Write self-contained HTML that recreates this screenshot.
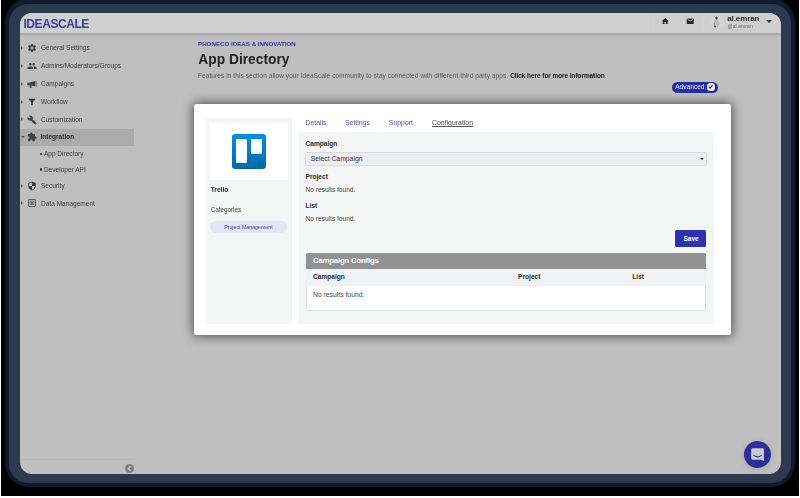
<!DOCTYPE html>
<html><head><meta charset="utf-8">
<style>
*{box-sizing:border-box;margin:0;padding:0}
html,body{width:800px;height:498px;overflow:hidden;background:#fff;font-family:"Liberation Sans",sans-serif;}
#blk{position:absolute;left:1px;top:0;width:798px;height:496px;background:#000;overflow:hidden}
#navy{position:absolute;left:3.5px;top:-2px;width:790.5px;height:489px;background:#0f1a2e;border-radius:24px}
#slate{position:absolute;left:8px;top:4px;width:781.6px;height:479px;background:#2c3a4e;border-radius:19px}
#scr{position:absolute;left:19px;top:13px;width:761px;height:461px;background:#bfbfbf;border-radius:12px;overflow:hidden}
#pg{position:absolute;left:-20px;top:-13px;width:800px;height:498px;filter:blur(.4px)}
.a{position:absolute;white-space:nowrap;line-height:1}
.a svg{display:block}
#hdr{position:absolute;left:20px;top:13px;width:761px;height:20.7px;background:#cfcfcf;border-bottom:1px solid #adadad;box-shadow:0 1px 1.5px rgba(0,0,0,.14)}
.sep{position:absolute;top:13px;width:1px;height:19px;background:#d2d2d2}
.mt{font-size:6.55px;color:#3c3c3c}
.ar{position:absolute;left:21.3px;width:0;height:0;border-left:2.6px solid #5a5a5a;border-top:2px solid transparent;border-bottom:2px solid transparent}
.ic{position:absolute;left:27px;width:10px;height:10px;margin-top:-.5px}
.ic svg{width:10px;height:10px;display:block;fill:#3f3f3f}
.lb{font-size:6.6px;font-weight:bold;color:#2b2b2b}
.tx{font-size:6.6px;color:#444}
.tab{font-size:6.9px;color:#4a50c4}
</style></head><body>
<div id="blk">
<div id="navy"></div>
<div id="slate"></div>
<div id="scr"><div id="pg">
 <div id="hdr"></div>
 <div class="sep" style="left:653px"></div><div class="sep" style="left:678px"></div><div class="sep" style="left:703px"></div>
 <div class="a" id="logo" style="left:23.4px;top:18.3px;font-size:12px;font-weight:bold;color:#3340a8;letter-spacing:-.42px">IDEASCALE</div>

 <!-- SIDEBAR -->
 <div class="a" style="left:20px;top:128.7px;width:114px;height:17.3px;background:#ababab"></div>
 <div class="ar" style="top:46.0px"></div>
 <div class="ic" style="top:43.7px"><svg viewBox="0 0 24 24"><path d="M19.14,12.94c0.04-0.3,0.06-0.61,0.06-0.94c0-0.32-0.02-0.64-0.07-0.94l2.03-1.58c0.18-0.14,0.23-0.41,0.12-0.61 l-1.92-3.32c-0.12-0.22-0.37-0.29-0.59-0.22l-2.39,0.96c-0.5-0.38-1.03-0.7-1.62-0.94L14.4,2.81c-0.04-0.24-0.24-0.41-0.48-0.41 h-3.84c-0.24,0-0.43,0.17-0.47,0.41L9.25,5.35C8.66,5.59,8.12,5.92,7.63,6.29L5.24,5.33c-0.22-0.08-0.47,0-0.59,0.22L2.74,8.87 C2.62,9.08,2.66,9.34,2.86,9.48l2.03,1.58C4.84,11.36,4.8,11.69,4.8,12s0.02,0.64,0.07,0.94l-2.03,1.58 c-0.18,0.14-0.23,0.41-0.12,0.61l1.92,3.32c0.12,0.22,0.37,0.29,0.59,0.22l2.39-0.96c0.5,0.38,1.03,0.7,1.62,0.94l0.36,2.54 c0.05,0.24,0.24,0.41,0.48,0.41h3.84c0.24,0,0.44-0.17,0.47-0.41l0.36-2.54c0.59-0.24,1.13-0.56,1.62-0.94l2.39,0.96 c0.22,0.08,0.47,0,0.59-0.22l1.92-3.32c0.12-0.22,0.07-0.47-0.12-0.61L19.14,12.94z M12,15.6c-1.98,0-3.6-1.62-3.6-3.6 s1.62-3.6,3.6-3.6s3.6,1.62,3.6,3.6S13.98,15.6,12,15.6z"/></svg></div>
 <div class="a mt" id="m_gear" style="left:41px;top:45.4px;">General Settings</div>
 <div class="ar" style="top:63.8px"></div>
 <div class="ic" style="top:61.5px"><svg viewBox="0 0 24 24"><path d="M16 11c1.66 0 2.99-1.34 2.99-3S17.66 5 16 5c-1.66 0-3 1.34-3 3s1.34 3 3 3zm-8 0c1.66 0 2.99-1.34 2.99-3S9.66 5 8 5C6.34 5 5 6.34 5 8s1.34 3 3 3zm0 2c-2.33 0-7 1.17-7 3.5V19h14v-2.5c0-2.33-4.67-3.5-7-3.5zm8 0c-.29 0-.62.02-.97.05 1.16.84 1.97 1.97 1.97 3.45V19h6v-2.5c0-2.33-4.67-3.5-7-3.5z"/></svg></div>
 <div class="a mt" id="m_group" style="left:41px;top:63.2px;">Admins/Moderators/Groups</div>
 <div class="ar" style="top:81.7px"></div>
 <div class="ic" style="top:79.4px"><svg viewBox="0 0 24 24"><path d="M0.4 9 H5 V15 H0.4Z M5.5 8.6 L19.4 5 V17.6 L5.5 15.3Z M6 15.6 L10.6 16.5 L10.9 21.6 H6.9Z"/><path d="M20.4 4.6 H23.6 V18.8 H20.4Z" fill="#707070"/></svg></div>
 <div class="a mt" id="m_horn" style="left:41px;top:81.1px;">Campaigns</div>
 <div class="ar" style="top:99.7px"></div>
 <div class="ic" style="top:97.4px"><svg viewBox="0 0 24 24"><path d="M4.25 5.61C6.27 8.2 10 13 10 13v6c0 .55.45 1 1 1h2c.55 0 1-.45 1-1v-6s3.72-4.8 5.74-7.39A.998.998 0 0 0 18.95 4H5.04c-.83 0-1.3.95-.79 1.61z"/></svg></div>
 <div class="a mt" id="m_filter" style="left:41px;top:99.1px;">Workflow</div>
 <div class="ar" style="top:117.4px"></div>
 <div class="ic" style="top:115.1px"><svg viewBox="0 0 24 24"><path d="M22.7 19l-9.1-9.1c.9-2.3.4-5-1.5-6.9-2-2-5-2.4-7.4-1.3L9 6 6 9 1.6 4.7C.4 7.1.9 10.1 2.9 12.1c1.9 1.9 4.6 2.4 6.9 1.5l9.1 9.1c.4.4 1 .4 1.4 0l2.3-2.3c.5-.4.5-1.1.1-1.4z"/></svg></div>
 <div class="a mt" id="m_wrench" style="left:41px;top:116.8px;">Customization</div>
 <div class="a" style="left:21px;top:135.6px;width:0;height:0;border-top:2.4px solid #555;border-left:2px solid transparent;border-right:2px solid transparent"></div>
 <div class="ic" style="top:132.7px"><svg viewBox="0 0 24 24"><path d="M20.5 11H19V7c0-1.1-.9-2-2-2h-4V3.500C13 2.120 11.880 1 10.500 1S8 2.120 8 3.500V5H4c-1.100 0-1.990.9-1.990 2v3.800H3.500c1.490 0 2.700 1.210 2.700 2.700s-1.210 2.700-2.700 2.700H2V20c0 1.100.9 2 2 2h3.800v-1.500c0-1.490 1.210-2.700 2.700-2.700 1.490 0 2.700 1.210 2.700 2.700V22H17c1.100 0 2-.9 2-2v-4h1.500c1.380 0 2.500-1.120 2.500-2.500S21.880 11 20.500 11z"/></svg></div>
 <div class="a mt" id="m_puzzle" style="left:40.4px;top:134.4px;font-weight:bold;color:#2a2a2a;">Integration</div>
 <div class="ar" style="top:183.5px"></div>
 <div class="ic" style="top:181.2px"><svg viewBox="0 0 24 24"><path d="M12 1L3 5v6c0 5.550 3.840 10.740 9 12 5.160-1.260 9-6.450 9-12V5l-9-4zm0 10.990h7c-.53 4.120-3.280 7.790-7 8.940V12H5V6.300l7-3.110v8.800z"/></svg></div>
 <div class="a mt" id="m_shield" style="left:41px;top:182.9px;">Security</div>
 <div class="ar" style="top:201.2px"></div>
 <div class="ic" style="top:198.9px"><svg viewBox="0 0 24 24"><path d="M3 3v18h18V3H3zm16 16H5V5h14v14z M11 6.500h1.800v11H11z M6.500 11.100h11v1.800h-11z M14 8h3v1.600h-3z M14 14.800h3v1.600h-3z M7 8h3v1.600H7z M7 14.800h3v1.600H7z"/></svg></div>
 <div class="a mt" id="m_table" style="left:41px;top:200.6px;">Data Management</div>
 <div class="a" style="left:39.6px;top:152.7px;width:2.5px;height:2.5px;border-radius:50%;background:#2c2c2c"></div>
 <div class="a mt" id="s1" style="left:43.9px;top:151.4px">App Directory</div>
 <div class="a" style="left:39.6px;top:168.0px;width:2.5px;height:2.5px;border-radius:50%;background:#2c2c2c"></div>
 <div class="a mt" id="s2" style="left:43.9px;top:166.7px">Developer API</div>
 <div class="a" style="left:661px;top:16.8px"><svg width="8.5" height="8.5" viewBox="0 0 24 24" fill="#262626"><path d="M10 20v-6h4v6h5v-8h3L12 3 2 12h3v8z"/></svg></div>
 <div class="a" style="left:686.2px;top:17.3px"><svg width="8.4" height="8.4" viewBox="0 0 24 24" fill="#262626"><path d="M20 4H4c-1.100 0-1.990.9-1.990 2L2 18c0 1.100.9 2 2 2h16c1.100 0 2-.9 2-2V6c0-1.100-.9-2-2-2zm0 4l-8 5-8-5V6l8 5 8-5v2z"/></svg></div>
 <div class="a" style="left:711.2px;top:16.4px;width:11.5px;height:11.5px;border-radius:50%;background:#d4d4d4"></div>
 <div class="a" style="left:711.2px;top:16.4px"><svg width="11.5" height="12" viewBox="0 0 23 24"><ellipse cx="10.9" cy="4.2" rx="2.4" ry="3.4" fill="#3a3a3a"/><path d="M8 8.5 Q4 14 6.5 20.5 L9.5 22.5 Q7.5 15 9.8 9.5Z" fill="#9a9a9a"/><path d="M13.2 9 Q17.5 13.5 14.2 21.5 L11.8 21 Q13.8 15 12.2 10Z" fill="#a8a8a8"/><path d="M9.5 10 L12.5 10 L12.5 20 L9.8 20Z" fill="#c2c2c2"/><ellipse cx="8" cy="21" rx="2.1" ry="1.9" fill="#4a4a4a"/></svg></div>
 <div class="a" id="uname" style="left:727.2px;top:14.6px;font-size:8px;font-weight:bold;color:#2b2b2b;letter-spacing:-.1px">al.emran</div>
 <div class="a" id="uhand" style="left:727.4px;top:24px;font-size:5.2px;color:#6a6a6a">@al.emran</div>
 <div class="a" style="left:766px;top:19.8px;width:0;height:0;border-top:3.1px solid #333;border-left:3.1px solid transparent;border-right:3.1px solid transparent"></div>

 <!-- MAIN -->
 <div class="a" style="left:198px;top:40.6px;font-size:6.2px;font-weight:bold;color:#323ca8;letter-spacing:0">PHONECO IDEAS &amp; INNOVATION</div>
 <div class="a" style="left:198.3px;top:52.5px;font-size:13.8px;font-weight:bold;color:#232323">App Directory</div>
 <div class="a" id="desc" style="left:198px;top:73.4px;font-size:6.4px;letter-spacing:.13px;color:#555">Features in this section allow your IdeaScale community to stay connected with different third party apps. <b style="color:#161616;letter-spacing:-.02px">Click here for more information</b>.</div>

 <!-- Advanced pill -->
 <div class="a" style="left:671.6px;top:81.7px;width:46.5px;height:11px;border-radius:6px;background:#2730a0"></div>
 <div class="a" style="left:675.2px;top:83.9px;font-size:6.6px;color:rgba(255,255,255,.88)">Advanced</div>
 <div class="a" style="left:707.4px;top:83.4px;width:7.2px;height:7.2px;border-radius:50%;background:#f4f4f8"></div>
 <div class="a" style="left:707.4px;top:83.4px"><svg width="7.2" height="7.2" viewBox="0 0 10 10"><path d="M2.5 5.2 L4.3 7 L7.7 3.2" fill="none" stroke="#1f2895" stroke-width="1.7"/></svg></div>

 <!-- CARD -->
 <div class="a" style="left:194.1px;top:104px;width:537px;height:230.6px;background:#fff;border-radius:2.5px;box-shadow:0 0 11px 1px rgba(0,0,0,.62)"></div>
 <!-- left panel -->
 <div class="a" style="left:206px;top:118px;width:86px;height:205.5px;background:#f4f6f6"></div>
 <div class="a" style="left:210.4px;top:122.5px;width:77.3px;height:57.9px;background:#fff"></div>
 <div class="a" style="left:231.8px;top:134.3px;width:34.3px;height:34.3px;border-radius:3.2px;background:linear-gradient(#0091e6,#0069a8)"></div>
 <div class="a" style="left:236.2px;top:139.2px;width:10.7px;height:23.9px;border-radius:1.3px;background:#fff"></div>
 <div class="a" style="left:251.2px;top:139.2px;width:10.6px;height:15px;border-radius:1.3px;background:#fff"></div>
 <div class="a lb" style="left:210.7px;top:187.2px;font-size:6.6px">Trello</div>
 <div class="a tx" style="left:210.7px;top:207.3px;font-size:6.3px">Categories</div>
 <div class="a" style="left:210.2px;top:221.2px;width:77.2px;height:12px;border-radius:6px;background:#e1e5f5"></div>
 <div class="a" style="left:224.2px;top:224.6px;font-size:5.25px;color:#3b46b0">Project Management</div>

 <!-- tabs -->
 <div class="a tab" style="left:305.5px;top:120.2px">Details</div>
 <div class="a tab" style="left:345px;top:120.2px">Settings</div>
 <div class="a tab" style="left:388.8px;top:120.2px">Support</div>
 <div class="a tab" style="left:432px;top:120.2px;color:#454545">Configuration</div>
 <div class="a" style="left:432px;top:126px;width:41px;height:.7px;background:#5a5a5a"></div>

 <!-- right panel -->
 <div class="a" style="left:298.8px;top:132px;width:415.2px;height:191.5px;background:#f4f6f6"></div>
 <div class="a lb" style="left:305.5px;top:141.1px">Campaign</div>
 <div class="a" style="left:305.2px;top:152px;width:401.4px;height:13.7px;border-radius:1.8px;background:#edeef3;border:.8px solid #d9dbe0"></div>
 <div class="a" style="left:310.7px;top:156.2px;font-size:6.8px;color:#333">Select Campaign</div>
 <div class="a" style="left:699.7px;top:157.6px;width:0;height:0;border-top:2.8px solid #3a3a3a;border-left:2.1px solid transparent;border-right:2.1px solid transparent"></div>
 <div class="a lb" style="left:305.5px;top:174.4px">Project</div>
 <div class="a tx" style="left:305.5px;top:187px">No results found.</div>
 <div class="a lb" style="left:305.5px;top:203.2px">List</div>
 <div class="a tx" style="left:305.5px;top:216.3px">No results found.</div>
 <!-- save -->
 <div class="a" style="left:675.2px;top:230.1px;width:31.2px;height:16.5px;border-radius:1.5px;background:#2b33b4"></div>
 <div class="a" style="left:683.4px;top:235.6px;font-size:6.6px;font-weight:bold;color:#fff">Save</div>
 <!-- table -->
 <div class="a" style="left:305.8px;top:268px;width:400.7px;height:42.7px;background:#fff;border:.8px solid #dcdde0;border-radius:0 0 1.5px 1.5px"></div>
 <div class="a" style="left:305.8px;top:253px;width:400.7px;height:15.5px;border-radius:1.5px 1.5px 0 0;background:#929292"></div>
 <div class="a" style="left:313px;top:256.7px;font-size:7.8px;letter-spacing:-.2px;font-weight:bold;color:#fff">Campaign Configs</div>
 <div class="a" style="left:306.4px;top:268.5px;width:399.5px;height:17.5px;background:#f1f2f5"></div>
 <div class="a lb" style="left:313px;top:273.7px">Campaign</div>
 <div class="a lb" style="left:518.1px;top:273.7px">Project</div>
 <div class="a lb" style="left:632.3px;top:273.7px">List</div>
 <div class="a tx" style="left:313px;top:291.8px;font-size:6.8px">No results found.</div>

 <!-- bottom sidebar -->
 <div class="a" style="left:20px;top:459px;width:114px;height:.8px;background:#b8b8b8"></div>
 <div class="a" style="left:125.1px;top:463.5px;width:9px;height:9px;border-radius:50%;background:#7f7f7f"></div>
 <div class="a" style="left:125.1px;top:463.5px"><svg width="9" height="9" viewBox="0 0 9 9"><path d="M5.5 2.2 L3.3 4.5 L5.5 6.8" fill="none" stroke="#c9c9c9" stroke-width="1.3"/></svg></div>
 <!-- chat -->
 <div class="a" style="left:744.1px;top:440.9px;width:27px;height:27px;border-radius:50%;background:#2b2f9a;box-shadow:0 1px 6px rgba(0,0,0,.12)"></div>
 <div class="a" style="left:751px;top:447.5px"><svg width="13.2" height="13.2" viewBox="0 0 13 13"><path d="M1.6 0.3 H11.4 Q12.8 .3 12.8 1.7 V13 L10 11.6 H1.6 Q.2 11.6 .2 10.2 V1.7 Q.2 .3 1.6 .3Z" fill="#c9c9cf"/><path d="M2.8 7.3 Q6.5 10.2 10.2 7.3" fill="none" stroke="#2b2f9a" stroke-width="1" stroke-linecap="round"/></svg></div>
</div></div>
</div>
</body></html>
